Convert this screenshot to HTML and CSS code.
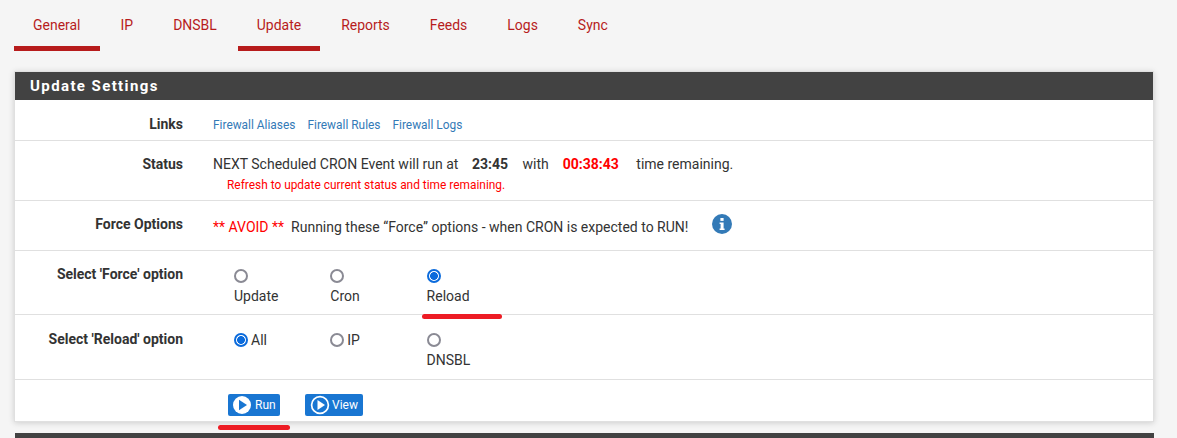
FILE: index.html
```html
<!DOCTYPE html>
<html lang="en">
<head>
<meta charset="utf-8">
<title>Update Settings</title>
<link rel="stylesheet" href="styles.css">
</head>
<body>
<nav class="tabs">
  <a class="tab active">General</a>
  <a class="tab">IP</a>
  <a class="tab">DNSBL</a>
  <a class="tab active">Update</a>
  <a class="tab">Reports</a>
  <a class="tab">Feeds</a>
  <a class="tab">Logs</a>
  <a class="tab">Sync</a>
</nav>
<section class="panel">
  <h2 class="panel-title">Update Settings</h2>
  <div class="row row-links">
    <div class="label">Links</div>
    <div class="value links"><a>Firewall Aliases</a><a>Firewall Rules</a><a>Firewall Logs</a></div>
  </div>
  <div class="row row-status">
    <div class="label">Status</div>
    <div class="value">
      <div class="status-line">
        <span>NEXT Scheduled CRON Event will run at</span><b class="time">23:45</b><span>with</span><b class="time remain">00:38:43</b><span>time remaining.</span>
      </div>
      <div class="refresh">Refresh to update current status and time remaining.</div>
    </div>
  </div>
  <div class="row row-force">
    <div class="label">Force Options</div>
    <div class="value force-line">
      <span class="avoid">** AVOID **</span><span>Running these “Force” options - when CRON is expected to RUN!</span>
      <svg class="info" viewBox="0 0 20 20" width="20" height="20" aria-hidden="true"><circle cx="10" cy="10" r="10" fill="#337ab7"/><rect x="8.4" y="4" width="3.2" height="2.9" fill="#fff"/><path d="M7.6 8.4h4v6h1v1.6H7.6v-1.6h1v-4.4h-1z" fill="#fff"/></svg>
    </div>
  </div>
  <div class="row row-select">
    <div class="label">Select 'Force' option</div>
    <div class="value options">
      <div class="opt"><span class="radio"></span><span class="opt-text">Update</span></div>
      <div class="opt"><span class="radio"></span><span class="opt-text">Cron</span></div>
      <div class="opt"><span class="radio on"></span><span class="opt-text">Reload</span></div>
    </div>
    <span class="mark mark-reload"></span>
  </div>
  <div class="row row-reload">
    <div class="label">Select 'Reload' option</div>
    <div class="value options">
      <div class="opt inline"><span class="radio on"></span><span class="opt-text">All</span></div>
      <div class="opt inline"><span class="radio"></span><span class="opt-text">IP</span></div>
      <div class="opt"><span class="radio"></span><span class="opt-text">DNSBL</span></div>
    </div>
  </div>
  <div class="row row-run">
    <div class="label"></div>
    <div class="value buttons">
      <button class="btn btn-run"><svg viewBox="0 0 20 20" width="20" height="20" aria-hidden="true"><circle cx="10" cy="10" r="9" fill="#fff"/><path d="M7 4.8L15 10L7 15.2z" fill="#1976d2"/></svg>Run</button>
      <button class="btn btn-view"><svg viewBox="0 0 20 20" width="20" height="20" aria-hidden="true"><circle cx="10" cy="10" r="8.4" fill="none" stroke="#fff" stroke-width="1.7"/><path d="M7.5 5L15 10L7.5 15z" fill="#fff"/></svg>View</button>
    </div>
  </div>
  <span class="mark mark-run"></span>
</section>
<div class="next-panel"></div>
</body>
</html>
```
FILE: styles.css
```css
* { box-sizing: border-box; }
html, body { height: 100%; }
body {
  margin: 0;
  height: 438px;
  overflow: hidden;
  background: #f5f5f5;
  color: #333;
  font-family: Roboto, "Liberation Sans", sans-serif;
  font-size: 14px;
}
.tabs {
  display: flex;
  height: 71px;
  padding: 0 0 0 14px;
  gap: 2px;
}
.tab {
  height: 51px;
  padding: 17px 19px 0;
  line-height: 16px;
  font-size: 13.97px;
  color: #b71c1c;
}
.tab.active { border-bottom: 5px solid #b71c1c; }
.panel {
  position: relative;
  margin: 0 23px 11px 14px;
  height: 351px;
  background: #fff;
  border: 1px solid #e0e0e0;
  box-shadow: 0 1px 6px rgba(0,0,0,.16);
}
.panel-title {
  margin: 0;
  height: 28px;
  padding-left: 15px;
  background: #424242;
  color: #fff;
  font-size: 15px;
  font-weight: 700;
  line-height: 28px;
  letter-spacing: 1.4px;
}
.row {
  position: relative;
  display: flex;
  border-top: 1px solid #e0e0e0;
}
.row-links { height: 40px; border-top: 0; }
.row-status { height: 60px; }
.row-force { height: 50px; }
.row-select { height: 64px; }
.row-reload { height: 65px; }
.row-run { height: 43px; }
.label {
  flex: 0 0 168px;
  text-align: right;
  font-size: 14px;
  font-weight: 700;
  color: #333;
}
.value { padding-left: 30px; }
.row-links .label { padding-top: 16px; line-height: 16px; }
.links { display: flex; gap: 12px; padding-top: 17px; font-size: 11.9px; line-height: 16px; color: #337ab7; }
.row-status .label { padding-top: 15px; line-height: 16px; }
.status-line { display: flex; padding-top: 15px; line-height: 16px; font-size: 14px; }
.time { margin: 0 14.5px 0 13.5px; font-weight: 700; }
.remain { color: #f00; margin: 0 17.5px 0 14px; }
.refresh { margin: 6px 0 0 14px; font-size: 11.9px; line-height: 14px; color: #f00; }
.row-force .label { padding-top: 15px; line-height: 16px; }
.force-line { display: flex; align-items: flex-start; padding-top: 18px; font-size: 14px; line-height: 16px; }
.avoid { color: #f00; margin-right: 7px; }
.info { margin: -5px 0 0 24px; }
.row-select .label { padding-top: 15px; line-height: 16px; }
.row-reload .label { padding-top: 16px; line-height: 16px; }
.options { display: flex; padding-left: 51px; padding-top: 18px; }
.opt { width: 96.3px; display: flex; flex-direction: column; font-size: 14px; line-height: 16px; color: #333; }
.opt .radio { margin-bottom: 5px; }
.opt-text { display: block; }
.opt.inline { flex-direction: row; align-items: flex-start; }
.inline .opt-text { margin-left: 3px; margin-top: -1px; }
.radio {
  display: block;
  width: 14px;
  height: 14px;
  border: 2px solid #8a8a94;
  border-radius: 50%;
  background: #fff;
}
.radio.on {
  border-color: #0b6bdc;
  background: radial-gradient(circle, #0b6bdc 0 3.6px, #fff 4.2px);
}
.buttons { display: flex; padding-top: 14px; padding-left: 45px; gap: 25px; }
.btn {
  display: flex;
  align-items: center;
  height: 22px;
  padding: 0 4px;
  gap: 3px;
  border: 0;
  border-radius: 2px;
  background: #1976d2;
  color: #fff;
  font-family: inherit;
  font-size: 12px;
}
.btn-run { width: 52px; }
.btn-view { width: 58px; padding-left: 5px; gap: 2px; }
.mark {
  position: absolute;
  z-index: 1;
  height: 5px;
  border-radius: 3px;
  background: #ed1c24;
}
.mark-reload { left: 407px; top: 63px; width: 80px; }
.mark-run { left: 203px; top: 353px; width: 72px; }
.next-panel {
  height: 10px;
  margin: 0 23px 0 15px;
  background: #424242;
}
```
